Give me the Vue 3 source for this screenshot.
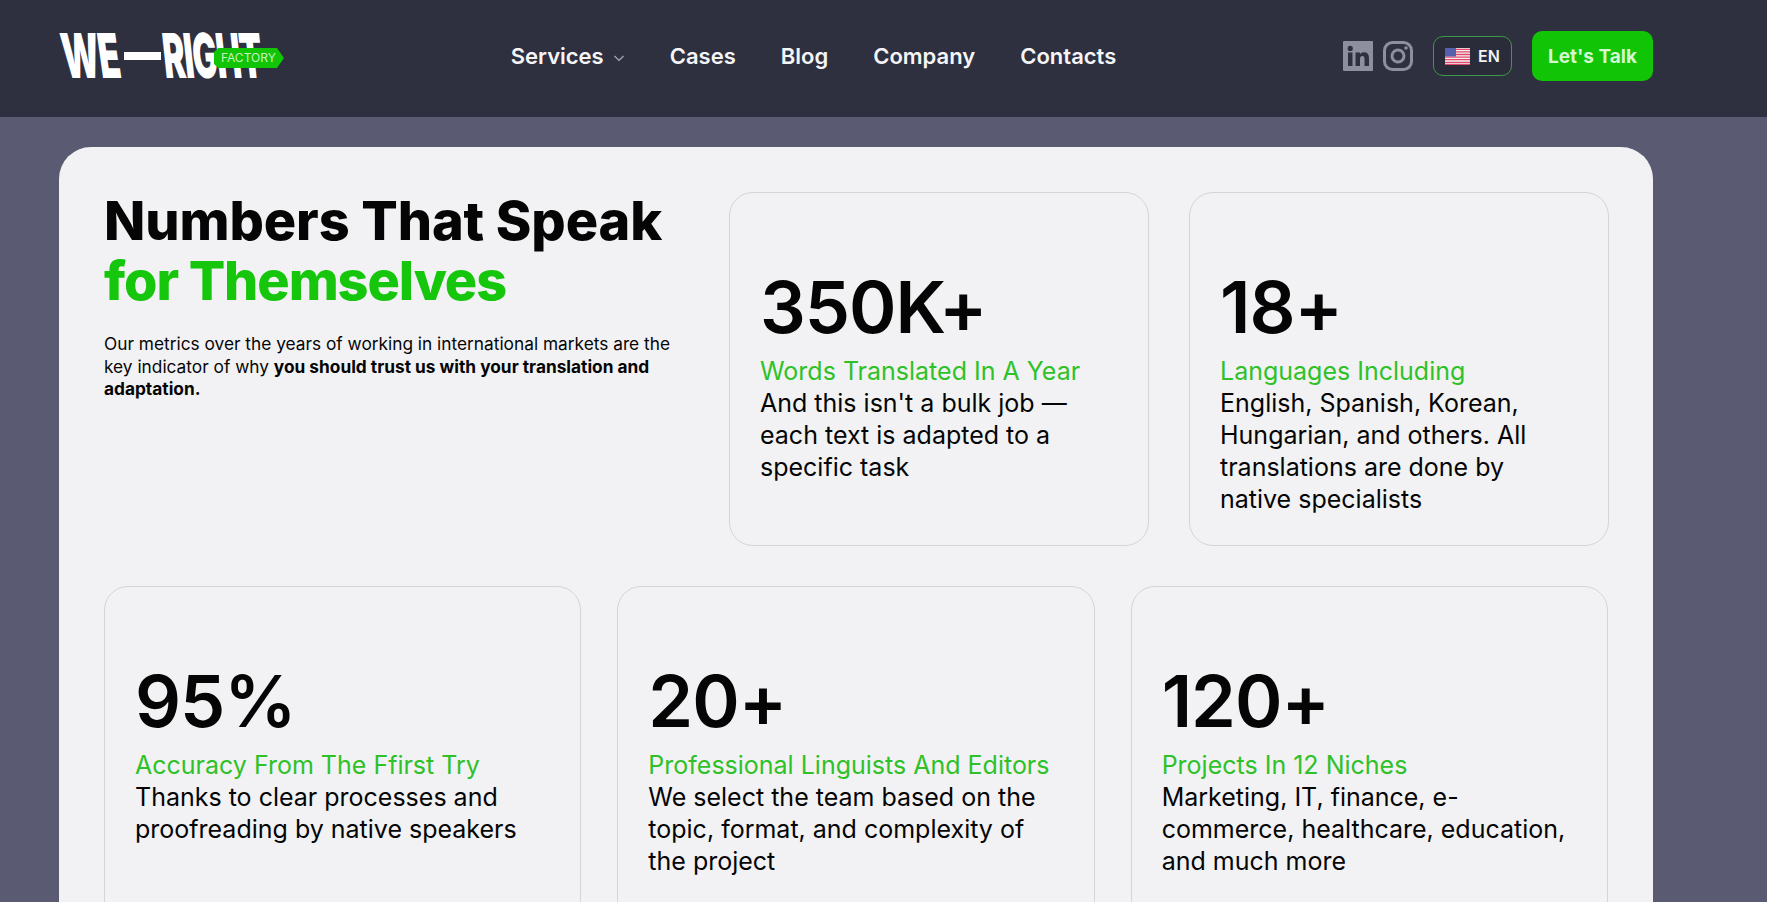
<template>
  <div class="page">
    <header class="topbar">
      <a class="logo">
        <span class="logo-word">WE</span>
        <span class="logo-dash"></span>
        <span class="logo-word">RIGHT</span>
        <span class="logo-tag">FACTORY</span>
      </a>

      <nav class="nav">
        <a v-for="link in links" :key="link.label" class="nav-link">
          {{ link.label }}
          <svg v-if="link.menu" class="chevron" viewBox="0 0 12 12" width="12" height="12">
            <path d="M1.5 4l4.5 4.5L10.500 4" fill="none" stroke="#a9abb8" stroke-width="1.2" />
          </svg>
        </a>
      </nav>

      <div class="actions">
        <svg class="social" viewBox="0 0 30 30" width="30" height="30">
          <path
            fill="#8d8f9e"
            fill-rule="evenodd"
            d="M1 0h28a1 1 0 0 1 1 1v28a1 1 0 0 1-1 1H1a1 1 0 0 1-1-1V1a1 1 0 0 1 1-1zM5 11.500V25h4.500V11.500zM7.250 4.800a2.600 2.600 0 1 0 0 5.200 2.600 2.600 0 0 0 0-5.200zM12.500 11.500V25H17v-7c0-2 .8-3 2.400-3s2.100 1 2.100 3v7H26v-8c0-4-2-5.800-5-5.800-1.900 0-3.200.8-4 2v-1.700z"
          />
        </svg>
        <svg class="social" viewBox="0 0 30 30" width="30" height="30">
          <rect x="1.500" y="1.500" width="27" height="27" rx="8" fill="none" stroke="#8d8f9e" stroke-width="3" />
          <circle cx="15" cy="15" r="6" fill="none" stroke="#8d8f9e" stroke-width="3" />
          <circle cx="23" cy="7" r="1.800" fill="#8d8f9e" />
        </svg>

        <button class="lang">
          <svg viewBox="0 0 25 17" width="25" height="17">
            <rect width="25" height="17" fill="#f4f0f4" />
            <path
              d="M0 1.300h25M0 3.900h25M0 6.500h25M0 9.100h25M0 11.700h25M0 14.300h25M0 16.400h25"
              stroke="#e2476a"
              stroke-width="1.300"
            />
            <rect width="11" height="8.500" fill="#5561ad" />
          </svg>
          EN
        </button>
        <button class="talk">Let's Talk</button>
      </div>
    </header>

    <main class="content">
      <section class="panel">
        <div class="top-row">
          <div class="intro">
            <h1>Numbers That Speak <span>for Themselves</span></h1>
            <p>
              Our metrics over the years of working in international markets are the key indicator
              of why <b>you should trust us with your translation and adaptation.</b>
            </p>
          </div>
          <div class="stat" v-for="item in topStats" :key="item.value">
            <div class="value">{{ item.value }}</div>
            <div class="title">{{ item.title }}</div>
            <div class="text">{{ item.text }}</div>
          </div>
        </div>

        <div class="bottom-row">
          <div class="stat" v-for="item in bottomStats" :key="item.value">
            <div class="value">{{ item.value }}</div>
            <div class="title">{{ item.title }}</div>
            <div class="text">{{ item.text }}</div>
          </div>
        </div>
      </section>
    </main>
  </div>
</template>

<script setup>
const links = [
  { label: 'Services', menu: true },
  { label: 'Cases' },
  { label: 'Blog' },
  { label: 'Company' },
  { label: 'Contacts' },
]

const topStats = [
  {
    value: '350K+',
    title: 'Words Translated In A Year',
    text: "And this isn't a bulk job — each text is adapted to a specific task",
  },
  {
    value: '18+',
    title: 'Languages Including',
    text: 'English, Spanish, Korean, Hungarian, and others. All translations are done by native specialists',
  },
]

const bottomStats = [
  {
    value: '95%',
    title: 'Accuracy From The Ffirst Try',
    text: 'Thanks to clear processes and proofreading by native speakers',
  },
  {
    value: '20+',
    title: 'Professional Linguists And Editors',
    text: 'We select the team based on the topic, format, and complexity of the project',
  },
  {
    value: '120+',
    title: 'Projects In 12 Niches',
    text: 'Marketing, IT, finance, e-commerce, healthcare, education, and much more',
  },
]
</script>

<style>
html,
body {
  margin: 0;
  height: 100%;
  overflow: hidden;
  background: #5a5b72;
}
</style>

<style scoped>
.page {
  font-family: Inter, 'Noto Sans', sans-serif;
  color: #050505;
}

.topbar {
  height: 117px;
  box-sizing: border-box;
  padding: 0 114px 5px 59px;
  background: #2e303f;
  display: flex;
  align-items: center;
  justify-content: space-between;
}

.logo {
  position: relative;
  width: 225px;
  height: 46px;
  display: flex;
  align-items: center;
  gap: 2px;
  color: #fff;
}

.logo-word {
  font-size: 62px;
  line-height: 46px;
  font-weight: 900;
  letter-spacing: -2px;
  transform-origin: left center;
  white-space: nowrap;
}

.logo-word:first-child {
  width: 60px;
  margin-left: 3px;
  transform: skewX(8deg) scaleX(0.56);
}

.logo-word:nth-child(3) {
  width: 101px;
  transform: skewX(6deg) scaleX(0.53);
}

.logo-dash {
  width: 37px;
  height: 8px;
  background: #fff;
}

.logo-tag {
  position: absolute;
  left: 155px;
  top: 15px;
  width: 70px;
  height: 20px;
  box-sizing: border-box;
  padding-left: 7px;
  background: #11c406;
  clip-path: polygon(6% 0, 90% 0, 100% 50%, 90% 100%, 6% 100%, 0 80%, 0 20%);
  font-size: 12px;
  line-height: 20px;
  color: #c5f2c0;
}

.nav {
  display: flex;
  align-items: center;
  gap: 45px;
}

.nav-link {
  display: flex;
  align-items: center;
  gap: 9px;
  font-size: 22px;
  font-weight: 600;
  color: #f5f5f7;
  white-space: nowrap;
}

.chevron {
  margin-top: 3px;
}

.actions {
  display: flex;
  align-items: center;
}

.social {
  margin-right: 10px;
}

.social + .lang {
  margin-left: 10px;
}

.lang {
  width: 79px;
  height: 40px;
  margin-right: 20px;
  padding: 0;
  display: flex;
  align-items: center;
  justify-content: center;
  gap: 8px;
  font: 600 16px Inter, sans-serif;
  color: #f2f2f5;
  background: #2a2c3a;
  border: 1px solid #3b9a47;
  border-radius: 10px;
}

.talk {
  width: 121px;
  height: 50px;
  padding: 0;
  font: 700 19px Inter, sans-serif;
  color: #d5f8d0;
  background: #11c406;
  border: none;
  border-radius: 10px;
}

.content {
  padding: 30px 114px 0 59px;
}

.panel {
  box-sizing: border-box;
  padding: 45px;
  background: #f2f2f4;
  border-radius: 32px 32px 0 0;
}

.top-row {
  display: grid;
  grid-template-columns: 585px 420px 420px;
  gap: 40px;
  margin-bottom: 40px;
}

.bottom-row {
  display: grid;
  grid-template-columns: repeat(3, 1fr);
  gap: 36px;
}

h1 {
  margin: -1px 0 0;
  font-size: 54px;
  line-height: 60px;
  font-weight: 800;
  letter-spacing: -0.1px;
}

h1 span {
  display: block;
  letter-spacing: -1.1px;
  color: #16c60c;
}

.intro p {
  margin: 22px 0 0;
  font-size: 17.300px;
  line-height: 22.500px;
  font-weight: 400;
}

.intro b {
  font-weight: 700;
}

.stat {
  box-sizing: border-box;
  height: 354px;
  padding: 65px 30px 30px;
  border: 1px solid #d4d5d9;
  border-radius: 24px;
}

.value {
  font-size: 72px;
  line-height: 97px;
  font-weight: 600;
  letter-spacing: -1px;
}

.title {
  font-size: 25px;
  line-height: 32px;
  color: #2fc128;
}

.text {
  font-size: 25px;
  line-height: 32px;
}
</style>
